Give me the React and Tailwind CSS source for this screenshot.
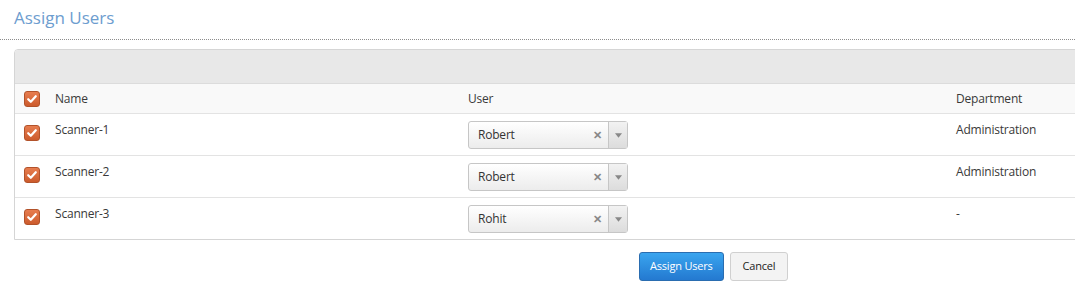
import React from 'react';

const rows = [
  { name: 'Scanner-1', user: 'Robert', dept: 'Administration' },
  { name: 'Scanner-2', user: 'Robert', dept: 'Administration' },
  { name: 'Scanner-3', user: 'Rohit', dept: '-' },
];

const Check = () => (
  <span className="flex h-4 w-4 items-center justify-center rounded-[3px] border border-[#b2522a] bg-gradient-to-b from-[#e77d4f] to-[#cc5b2c]">
    <svg viewBox="0 0 12 12" className="h-3 w-3">
      <path d="M2.2 6.2 L4.8 8.8 L9.8 3.2" fill="none" stroke="#fff" strokeWidth="2.2" strokeLinecap="round" strokeLinejoin="round" />
    </svg>
  </span>
);

const UserSelect = ({ value }) => (
  <div className="flex h-[28px] w-[160px] items-stretch rounded-[3px] border border-[#c6c6c6] bg-gradient-to-b from-white to-[#ececec]">
    <span className="flex flex-1 items-center pl-[9px] text-[#333]">{value}</span>
    <span className="flex w-[22px] items-center justify-center text-[11px] font-bold text-[#888]">✕</span>
    <span className="flex w-[19px] items-center justify-center border-l border-[#c6c6c6] bg-gradient-to-b from-[#f2f2f2] to-[#dcdcdc]">
      <svg viewBox="0 0 8 5" className="h-[5px] w-[7px]">
        <path d="M0 0 L8 0 L4 5 Z" fill="#888" />
      </svg>
    </span>
  </div>
);

export default function App() {
  return (
    <div className="h-[297px] w-[1075px] overflow-hidden bg-white font-['Open_Sans',sans-serif] text-[12px] tracking-[-0.2px] text-[#393939]">
      <div className="px-[14px] pt-[7px] pb-[10px]">
        <h1 className="text-[17px] leading-[22px] tracking-normal text-[#6d9dcf]">Assign Users</h1>
      </div>
      <div className="border-t border-dotted border-[#8c8c8c]" />
      <div className="ml-[14px] mt-[9px] w-[1075px] overflow-hidden rounded-tl-[4px] border border-[#d5d5d5]">
        <div className="h-[33px] bg-[#e8e8e8]" />
        <div className="flex h-[30px] items-center border-t border-[#dcdcdc] bg-[#f9f9f9]">
          <div className="w-[40px] pl-[9px]"><Check /></div>
          <div className="w-[413px]">Name</div>
          <div className="w-[488px]">User</div>
          <div>Department</div>
        </div>
        {rows.map((r) => (
          <div key={r.name} className="flex h-[42px] border-t border-[#e3e3e3] pt-[7px] pb-[6px]">
            <div className="w-[40px] pl-[9px] pt-[4px]"><Check /></div>
            <div className="w-[413px]">{r.name}</div>
            <div className="w-[488px]"><UserSelect value={r.user} /></div>
            <div>{r.dept}</div>
          </div>
        ))}
      </div>
      <div className="mt-[12px] flex gap-[6px] pl-[639px]">
        <button className="h-[29px] rounded-[3px] border border-[#2a6db0] bg-gradient-to-b from-[#3aa5ef] to-[#2479d0] px-[10px] text-[11px] text-white">Assign Users</button>
        <button className="h-[29px] rounded-[3px] border border-[#d0d0d0] bg-[#f3f3f3] px-[12px] text-[11px] text-[#222]">Cancel</button>
      </div>
    </div>
  );
}
